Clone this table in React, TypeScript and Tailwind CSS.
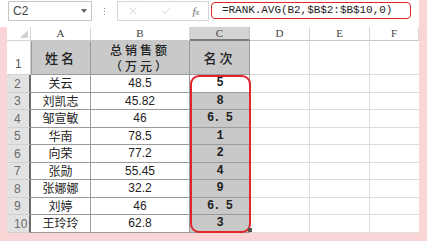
import { X, Check } from 'lucide-react';

const rows = [
  { name: '关云', sales: '48.5', rank: '5' },
  { name: '刘凯志', sales: '45.82', rank: '8' },
  { name: '邹宣敏', sales: '46', rank: '6. 5' },
  { name: '华南', sales: '78.5', rank: '1' },
  { name: '向荣', sales: '77.2', rank: '2' },
  { name: '张勋', sales: '55.45', rank: '4' },
  { name: '张娜娜', sales: '32.2', rank: '9' },
  { name: '刘婷', sales: '46', rank: '6. 5' },
  { name: '王玲玲', sales: '62.8', rank: '3' },
];

const cjk = "font-['SimSun','Noto_Sans_CJK_SC',serif]";

export default function App() {
  return (
    <div className="w-[427px] h-[241px] bg-[#fbd5d5] overflow-hidden">
      <div className="ml-[7px] w-[412px] h-[232px] bg-white relative">
        {/* Formula bar */}
        <div className="h-[27px] flex items-start pt-[1px] -ml-[7px] pl-[8px] w-[419px] bg-white">
          <div className="w-[84px] h-[20px] border border-[#c6c6c6] flex items-center justify-between px-[4px]">
            <span className="text-[12px] text-[#444] font-['Liberation_Sans',sans-serif]">C2</span>
            <span className="w-0 h-0 border-l-[3px] border-r-[3px] border-t-[4px] border-l-transparent border-r-transparent border-t-[#666]" />
          </div>
          <div className="w-[25px] h-[20px] flex flex-col items-center justify-center gap-[2px]">
            <span className="w-[1px] h-[1px] bg-[#999]" />
            <span className="w-[1px] h-[1px] bg-[#999]" />
            <span className="w-[1px] h-[1px] bg-[#999]" />
          </div>
          <div className="w-[92px] h-[20px] border border-[#d6d6d6] flex items-center justify-between px-[9px]">
            <X size={12} strokeWidth={1.2} className="text-[#b8b8b8]" />
            <Check size={12} strokeWidth={1.2} className="text-[#b8b8b8]" />
            <span className="text-[11px] italic text-[#666] font-['Liberation_Serif',serif]">
              f<span className="text-[8px]">x</span>
            </span>
          </div>
          <div className="ml-[2px] mt-[1px] w-[200px] h-[17px] border-[1.5px] border-[#e0262a] rounded-[4px] flex items-center pl-[10px]">
            <span className="text-[11px] text-[#222] font-['Liberation_Mono',monospace] tracking-[-0.05px]">
              =RANK.AVG(B2,$B$2:$B$10,0)
            </span>
          </div>
        </div>

        {/* Grid */}
        <div className="grid grid-cols-[24px_60px_99px_60px_60px_60px_49px] grid-rows-[14px_34px_repeat(9,17.5px)] text-[#222]">
          {/* column headers */}
          <div className="bg-white border-r border-b border-[#d4d4d4] relative">
            <span
              className="absolute right-[2px] bottom-[2px] w-0 h-0"
              style={{ borderBottom: '8px solid #d2d2d2', borderLeft: '8px solid transparent' }}
            />
          </div>
          {['A', 'B', 'C', 'D', 'E', 'F'].map((c) => (
            <div
              key={c}
              className={`flex items-center justify-center text-[11px] text-[#444] font-['Liberation_Serif',serif] border-r ${
                c === 'C' ? 'bg-[#d3d3d3] border-[#c0c0c0] border-b-2 border-b-[#7a7a7a]' : 'bg-white border-[#d8d8d8] border-b border-b-[#c8c8c8]'
              }`}
            >
              {c}
            </div>
          ))}

          {/* row 1 */}
          <div className="bg-white border-r border-b border-[#d4d4d4] flex items-end pl-[8px] pb-[1px] text-[12px] text-[#555] font-['Liberation_Sans',sans-serif]">
            1
          </div>
          <div className={`bg-[#c9c9c9] border-r border-b border-l border-[#9a9a9a] flex items-center justify-center text-[13px] font-medium tracking-[3px] ${cjk}`}>
            姓名
          </div>
          <div className={`bg-[#c9c9c9] border-r border-b border-[#9a9a9a] flex flex-col items-center justify-center text-[12px] font-medium tracking-[3px] ${cjk}`}>
            <span className="block leading-[16px] h-[16px]">总销售额</span>
            <span className="block leading-[16px] h-[16px]">（万元）</span>
          </div>
          <div className={`bg-[#c9c9c9] border-r border-b border-[#9a9a9a] flex items-center justify-center text-[13px] font-medium tracking-[3px] ${cjk}`}>
            名次
          </div>
          <div className="border-r border-b border-[#dcdcdc]" />
          <div className="border-r border-b border-[#dcdcdc]" />
          <div className="border-b border-[#dcdcdc]" />

          {rows.map((r, i) => (
            <div key={i} className="contents">
              <div className="bg-[#e2e2e2] border-r-2 border-r-[#6a6a6a] border-b border-b-[#d0d0d0] flex items-end pl-[7px] text-[12px] leading-[16px] text-[#6a6a6a] font-['Liberation_Sans',sans-serif]">
                {i + 2}
              </div>
              <div className={`bg-white border-r border-b border-[#9a9a9a] flex items-center justify-center text-[12px] ${cjk}`}>
                {r.name}
              </div>
              <div className="bg-white border-r border-b border-[#9a9a9a] flex items-center justify-center text-[12px] font-['Liberation_Sans',sans-serif]">
                {r.sales}
              </div>
              <div
                className={`${i === 0 ? 'bg-white' : 'bg-[#c9c9c9]'} border-r border-b border-[#9a9a9a] flex items-center justify-center text-[12px] tracking-[-1px] font-bold font-['Liberation_Mono',monospace]`}
              >
                {r.rank}
              </div>
              <div className="border-r border-b border-[#dcdcdc]" />
              <div className="border-r border-b border-[#dcdcdc]" />
              <div className="border-b border-[#dcdcdc]" />
            </div>
          ))}
        </div>

        {/* red highlight around rank column */}
        <div className="absolute left-[183px] top-[75px] w-[61px] h-[158px] border-2 border-[#e0262a] rounded-[9px] pointer-events-none" />
        <div className="absolute left-[241px] top-[228px] w-[4px] h-[4px] bg-[#555]" />
      </div>
    </div>
  );
}
